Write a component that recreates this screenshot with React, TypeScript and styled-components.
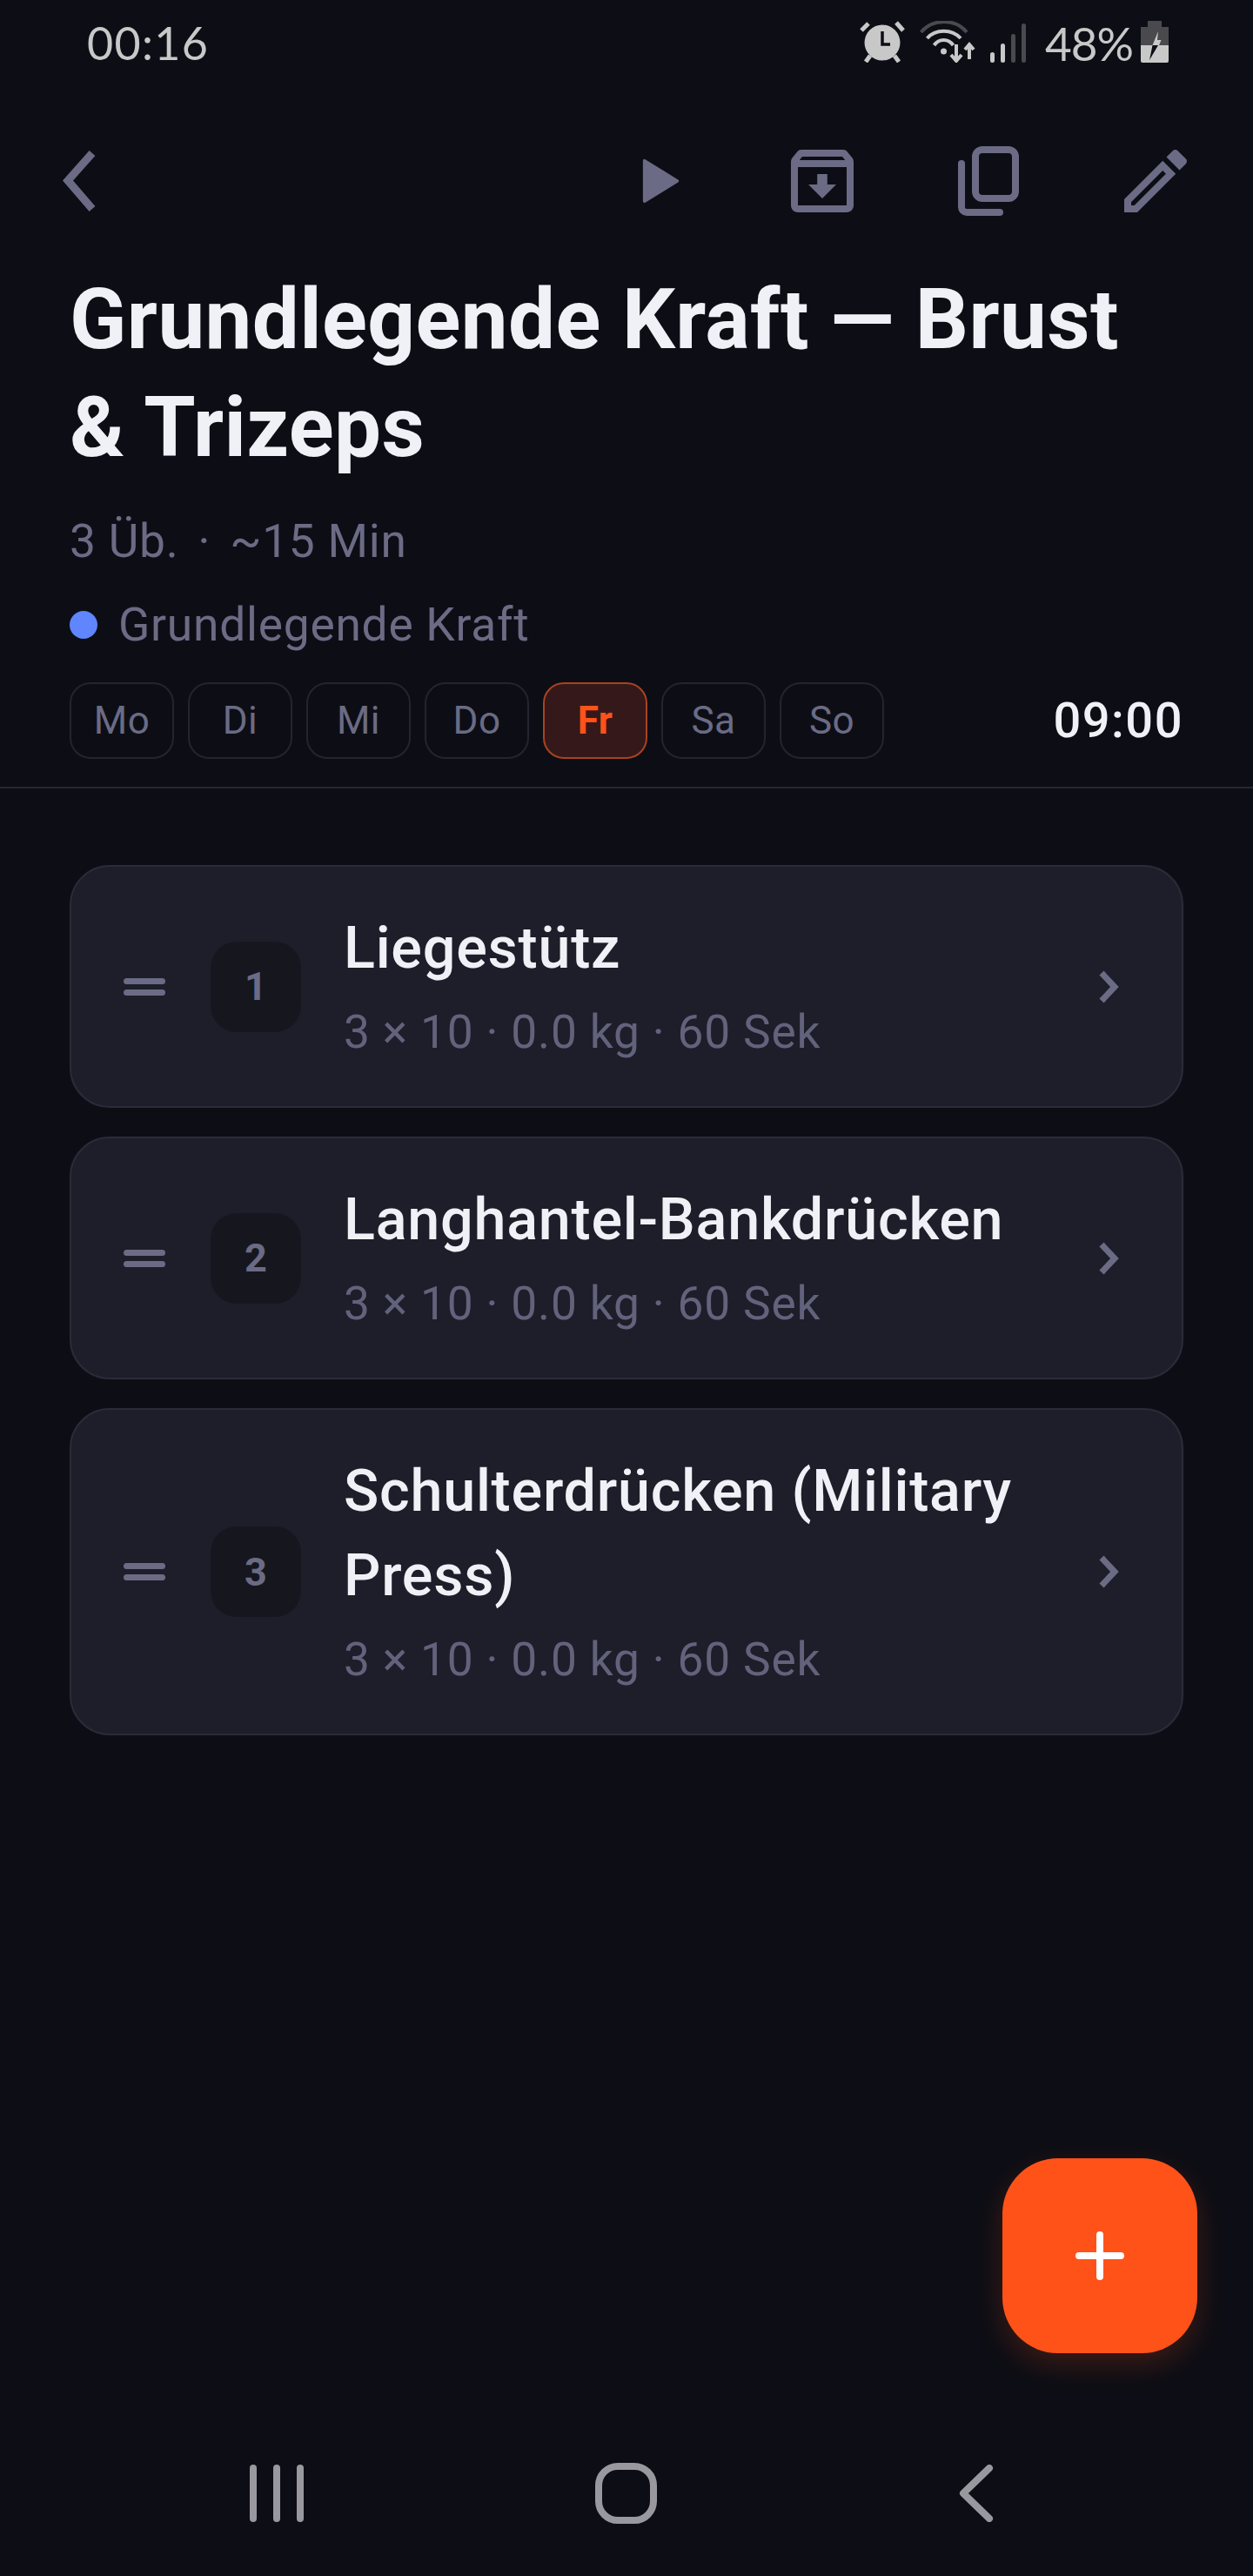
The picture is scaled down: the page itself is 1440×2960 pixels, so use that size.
import React from 'react';
import styled, { createGlobalStyle } from 'styled-components';

const GlobalStyle = createGlobalStyle`
  html, body {
    margin: 0;
    padding: 0;
    background: #0d0e15;
  }
  * {
    box-sizing: border-box;
  }
`;

const Page = styled.div`
  position: relative;
  width: 1440px;
  height: 2960px;
  display: flex;
  flex-direction: column;
  overflow: hidden;
  background: #0d0e15;
  font-family: Roboto, "Liberation Sans", sans-serif;
  color: #f0f1f6;
`;

const StatusBar = styled.div`
  height: 100px;
  flex: none;
  display: flex;
  align-items: flex-start;
  justify-content: space-between;
  padding: 24px 97px 0 100px;
  color: #c8c8c8;
  font-family: Lato, "Open Sans", sans-serif;
  font-weight: 400;
`;

const StatusTime = styled.span`
  font-size: 52px;
  line-height: 50px;
  letter-spacing: 1.3px;
`;

const StatusIcons = styled.div`
  display: flex;
  align-items: flex-start;
`;

const StatusPercent = styled.span`
  margin: 0 9px 0 22px;
  font-size: 53px;
  line-height: 52px;
  letter-spacing: -1px;
`;

const TopBar = styled.div`
  flex: none;
  margin-top: 60px;
  height: 96px;
  display: flex;
  align-items: center;
  padding: 0 64px 0 64px;
`;

const BackButton = styled.div`
  width: 56px;
  height: 96px;
  margin-right: auto;
  display: flex;
  align-items: center;
`;

const IconSlot = styled.div`
  width: 96px;
  height: 96px;
  margin-left: 94px;
  display: flex;
  align-items: center;
  justify-content: center;

  &:last-child {
    margin-left: 97px;
  }
`;

const Header = styled.header`
  flex: none;
  padding: 49px 80px 32px;
  border-bottom: 2px solid #252633;
`;

const Title = styled.h1`
  margin: 0;
  font-size: 96px;
  line-height: 124px;
  font-weight: 700;
  letter-spacing: 0.4px;
  color: #f0f1f6;
`;

const Meta = styled.div`
  margin-top: 33px;
  display: flex;
  gap: 22px;
  font-size: 53.3px;
  line-height: 72px;
  letter-spacing: 0.75px;
  color: #6b6b85;
`;

const TypeRow = styled.div`
  margin-top: 24px;
  display: flex;
  align-items: center;
  gap: 24px;
  font-size: 53.3px;
  line-height: 72px;
  letter-spacing: 0.75px;
  color: #6b6b85;
`;

const TypeDot = styled.span`
  width: 32px;
  height: 32px;
  border-radius: 50%;
  background: #5f85ff;
`;

const ScheduleRow = styled.div`
  margin-top: 30px;
  display: flex;
  align-items: center;
  justify-content: space-between;
`;

const DayList = styled.div`
  display: flex;
  gap: 16px;
`;

const DayChip = styled.div<{ $active?: boolean }>`
  width: 120px;
  height: 88px;
  display: flex;
  align-items: center;
  justify-content: center;
  border-radius: 24px;
  border: 2.5px solid ${(p) => (p.$active ? '#a8431f' : '#232430')};
  background: ${(p) => (p.$active ? '#35191a' : 'transparent')};
  color: ${(p) => (p.$active ? '#ff5219' : '#6b6b85')};
  font-size: 44px;
  letter-spacing: 0.5px;
  font-weight: ${(p) => (p.$active ? 700 : 400)};
`;

const ScheduleTime = styled.span`
  font-size: 56px;
  font-weight: 500;
  letter-spacing: 1.5px;
  color: #f0f1f6;
`;

const ExerciseList = styled.main`
  flex: 1;
  display: flex;
  flex-direction: column;
  gap: 33px;
  padding: 88px 80px 0;
`;

const ExerciseCard = styled.div`
  display: flex;
  align-items: center;
  padding: 45px 0 45px 60px;
  background: #1d1e29;
  border: 2.5px solid #2a2b38;
  border-radius: 46px;
`;

const DragHandle = styled.div`
  flex: none;
  width: 48px;
  display: flex;
  flex-direction: column;
  gap: 6px;
  margin-right: 52px;

  span {
    height: 7px;
    border-radius: 4px;
    background: #6b6b85;
  }
`;

const NumberBadge = styled.div`
  flex: none;
  width: 104px;
  height: 104px;
  display: flex;
  align-items: center;
  justify-content: center;
  border-radius: 30px;
  background: #16171e;
  color: #6b6b85;
  font-size: 45px;
  font-weight: 700;
`;

const ExerciseText = styled.div`
  flex: 1;
  min-width: 0;
  margin-left: 49px;
  padding-right: 70px;
`;

const ExerciseName = styled.div`
  font-size: 66.5px;
  line-height: 97px;
  letter-spacing: 0.75px;
  font-weight: 500;
  color: #f0f1f6;
`;

const ExerciseSub = styled.div`
  margin-top: 8px;
  font-size: 53.3px;
  line-height: 80px;
  letter-spacing: 0.8px;
  color: #62627c;
`;

const ChevronSlot = styled.div`
  flex: none;
  width: 96px;
  display: flex;
  justify-content: flex-start;
`;

const Fab = styled.button`
  position: absolute;
  left: 1152px;
  top: 2480px;
  width: 224px;
  height: 224px;
  padding: 0;
  border: none;
  border-radius: 64px;
  display: flex;
  align-items: center;
  justify-content: center;
  background: #ff5219;
  box-shadow: 0 12px 32px rgba(255, 82, 25, 0.2);
`;

const NavBar = styled.nav`
  flex: none;
  height: 190px;
  display: flex;
  justify-content: center;
  align-items: center;
`;

const NavCell = styled.div`
  width: 402px;
  display: flex;
  justify-content: center;
  align-items: center;
`;

const days = ['Mo', 'Di', 'Mi', 'Do', 'Fr', 'Sa', 'So'];

const exercises = [
  { id: 1, name: 'Liegestütz' },
  { id: 2, name: 'Langhantel-Bankdrücken' },
  { id: 3, name: 'Schulterdrücken (Military Press)' },
];

const AlarmIcon = () => (
  <svg width="52" height="48" viewBox="0 0 52 48">
    <circle cx="26" cy="25" r="20.5" fill="#c8c8c8" />
    <g stroke="#c8c8c8" strokeWidth="5" fill="none">
      <path d="M2 11 10 3" />
      <path d="M42 2 50 11" />
      <path d="M7 47 12 40" />
      <path d="M45 47 40 40" />
    </g>
    <path d="M26 12V27H35" stroke="#0d0e15" strokeWidth="3.5" fill="none" />
  </svg>
);

const WifiIcon = () => (
  <svg width="64" height="48" viewBox="0 0 64 48" style={{ marginLeft: 17 }}>
    <g fill="none" strokeWidth="4">
      <path d="M1.5 13C15 -3 41 -3 54 13" stroke="#4a4a4e" />
      <path d="M8.5 20C18 9 37 9 47 20" stroke="#c8c8c8" />
      <path d="M16.5 28C22 20 33 20 38.5 28" stroke="#c8c8c8" />
      <path d="M42 27V45M36 39 42 46 48 39" stroke="#c8c8c8" />
      <path d="M57 44V28M52 33 57 27 62 33" stroke="#c8c8c8" />
    </g>
    <circle cx="27.5" cy="35" r="3.5" fill="#c8c8c8" />
  </svg>
);

const SignalIcon = () => (
  <svg width="41" height="45" viewBox="0 0 41 45" style={{ marginLeft: 17, marginTop: 3 }}>
    <rect x="0" y="33" width="5" height="12" rx="2.5" fill="#c8c8c8" />
    <rect x="12" y="23" width="5" height="22" rx="2.5" fill="#c8c8c8" />
    <rect x="24" y="12" width="5" height="33" rx="2.5" fill="#4a4a4e" />
    <rect x="36" y="0" width="5" height="45" rx="2.5" fill="#4a4a4e" />
  </svg>
);

const BatteryIcon = () => (
  <svg width="32" height="48" viewBox="0 0 32 48">
    <path d="M8 0H24V7H32V28H0V7H8Z" fill="#4a4a4e" />
    <path d="M0 28H32V46a2 2 0 0 1-2 2H2a2 2 0 0 1-2-2Z" fill="#c8c8c8" />
    <path d="M20 12 13.5 28H21L23.5 22H19Z" fill="#c8c8c8" />
    <path d="M13.5 28 10 45 20 28Z" fill="#0d0e15" />
  </svg>
);

const ChevronLeft = () => (
  <svg width="46" height="70" viewBox="0 0 46 70">
    <path d="M42 3 14 34.5 42 67" fill="none" stroke="#6b6b85" strokeWidth="9" />
  </svg>
);

const PlayIcon = () => (
  <svg width="86" height="86" viewBox="0 0 24 24">
    <path d="M8 5.5v13l10.5-6.5z" fill="#6b6b85" stroke="#6b6b85" strokeWidth="1" strokeLinejoin="round" />
  </svg>
);

const ArchiveIcon = () => (
  <svg width="96" height="96" viewBox="0 0 24 24">
    <path
      fill="#6b6b85"
      d="M20.54 5.23l-1.39-1.68C18.88 3.21 18.47 3 18 3H6c-.47 0-.88.21-1.16.55L3.46 5.23C3.17 5.57 3 6.02 3 6.5V19c0 1.1.9 2 2 2h14c1.1 0 2-.9 2-2V6.5c0-.48-.17-.93-.46-1.27zM6.24 5h11.52l.81.97H5.44l.8-.97zM5 19V8h14v11H5zm8.45-9h-2.9v3H8l4 4 4-4h-2.55z"
    />
  </svg>
);

const CopyIcon = () => (
  <svg width="96" height="96" viewBox="0 0 96 96">
    <rect x="34" y="12" width="46" height="56" rx="8" fill="none" stroke="#6b6b85" strokeWidth="8" />
    <path d="M18 28V78a6 6 0 0 0 6 6H62" fill="none" stroke="#6b6b85" strokeWidth="8" strokeLinecap="round" />
  </svg>
);

const PencilIcon = () => (
  <svg width="96" height="96" viewBox="0 0 24 24">
    <path
      fill="#6b6b85"
      d="M14.06 9.02l.92.92L5.92 19H5v-.92l9.06-9.06M17.66 3c-.25 0-.51.1-.7.29l-1.83 1.83 3.75 3.75 1.83-1.83c.39-.39.39-1.02 0-1.41l-2.34-2.34c-.2-.2-.45-.29-.71-.29zm-3.6 3.19L3 17.25V21h3.75L17.81 9.94l-3.75-3.75z"
    />
  </svg>
);

const ChevronRight = () => (
  <svg width="24" height="38" viewBox="0 0 24 38">
    <path d="M4 3 19 19 4 35" fill="none" stroke="#6b6b85" strokeWidth="7" />
  </svg>
);

const PlusIcon = () => (
  <svg width="56" height="56" viewBox="0 0 56 56">
    <path d="M28 4V52M4 28H52" stroke="#fff" strokeWidth="8" strokeLinecap="round" />
  </svg>
);

const NavRecents = () => (
  <svg width="62" height="66" viewBox="0 0 62 66">
    <g stroke="#98989e" strokeWidth="8" strokeLinecap="round">
      <path d="M4 4V62" />
      <path d="M31 4V62" />
      <path d="M58 4V62" />
    </g>
  </svg>
);

const NavHome = () => (
  <svg width="72" height="70" viewBox="0 0 72 70">
    <rect x="4" y="4" width="63" height="62" rx="22" fill="none" stroke="#98989e" strokeWidth="8" />
  </svg>
);

const NavBack = () => (
  <svg width="40" height="66" viewBox="0 0 40 66">
    <path d="M35 4 5 33 35 62" fill="none" stroke="#98989e" strokeWidth="8" strokeLinecap="round" strokeLinejoin="round" />
  </svg>
);

const App = () => {
  return (
    <Page>
      <GlobalStyle />
      <StatusBar>
        <StatusTime>00:16</StatusTime>
        <StatusIcons>
          <AlarmIcon />
          <WifiIcon />
          <SignalIcon />
          <StatusPercent>48%</StatusPercent>
          <BatteryIcon />
        </StatusIcons>
      </StatusBar>

      <TopBar>
        <BackButton>
          <ChevronLeft />
        </BackButton>
        <IconSlot>
          <PlayIcon />
        </IconSlot>
        <IconSlot>
          <ArchiveIcon />
        </IconSlot>
        <IconSlot>
          <CopyIcon />
        </IconSlot>
        <IconSlot>
          <PencilIcon />
        </IconSlot>
      </TopBar>

      <Header>
        <Title>Grundlegende Kraft — Brust &amp; Trizeps</Title>
        <Meta>
          <span>3 Üb.</span>
          <span>·</span>
          <span>~15 Min</span>
        </Meta>
        <TypeRow>
          <TypeDot />
          Grundlegende Kraft
        </TypeRow>
        <ScheduleRow>
          <DayList>
            {days.map((day) => (
              <DayChip key={day} $active={day === 'Fr'}>
                {day}
              </DayChip>
            ))}
          </DayList>
          <ScheduleTime>09:00</ScheduleTime>
        </ScheduleRow>
      </Header>

      <ExerciseList>
        {exercises.map((ex) => (
          <ExerciseCard key={ex.id}>
            <DragHandle>
              <span />
              <span />
            </DragHandle>
            <NumberBadge>{ex.id}</NumberBadge>
            <ExerciseText>
              <ExerciseName>{ex.name}</ExerciseName>
              <ExerciseSub>3 × 10 · 0.0 kg · 60 Sek</ExerciseSub>
            </ExerciseText>
            <ChevronSlot>
              <ChevronRight />
            </ChevronSlot>
          </ExerciseCard>
        ))}
      </ExerciseList>

      <Fab>
        <PlusIcon />
      </Fab>

      <NavBar>
        <NavCell>
          <NavRecents />
        </NavCell>
        <NavCell>
          <NavHome />
        </NavCell>
        <NavCell>
          <NavBack />
        </NavCell>
      </NavBar>
    </Page>
  );
};

export default App;
